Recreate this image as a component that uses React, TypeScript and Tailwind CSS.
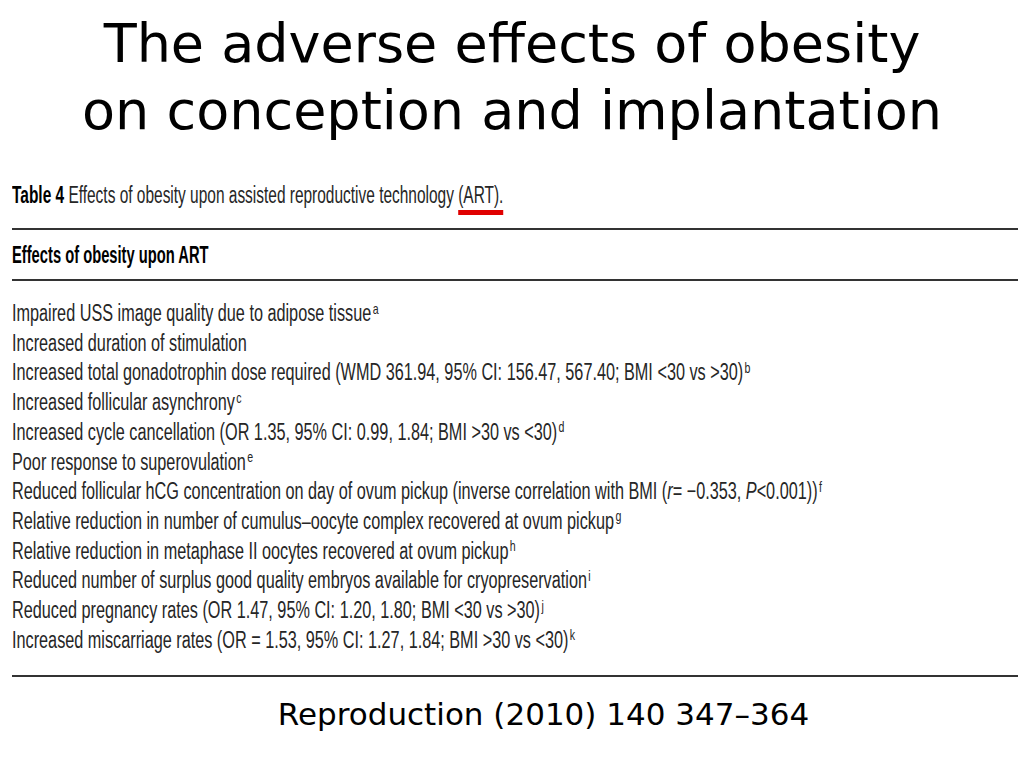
import type { ReactNode } from "react";

const rows: ReactNode[] = [
  <>Impaired USS image quality due to adipose tissue<sup>a</sup></>,
  <>Increased duration of stimulation</>,
  <>Increased total gonadotrophin dose required (WMD 361.94, 95% CI: 156.47, 567.40; BMI &lt;30 vs &gt;30)<sup>b</sup></>,
  <>Increased follicular asynchrony<sup>c</sup></>,
  <>Increased cycle cancellation (OR 1.35, 95% CI: 0.99, 1.84; BMI &gt;30 vs &lt;30)<sup>d</sup></>,
  <>Poor response to superovulation<sup>e</sup></>,
  <>
    Reduced follicular hCG concentration on day of ovum pickup (inverse correlation with BMI (<i>r</i>= −0.353, <i>P</i>&lt;0.001))<sup>f</sup>
  </>,
  <>Relative reduction in number of cumulus–oocyte complex recovered at ovum pickup<sup>g</sup></>,
  <>Relative reduction in metaphase II oocytes recovered at ovum pickup<sup>h</sup></>,
  <>Reduced number of surplus good quality embryos available for cryopreservation<sup>i</sup></>,
  <>Reduced pregnancy rates (OR 1.47, 95% CI: 1.20, 1.80; BMI &lt;30 vs &gt;30)<sup>j</sup></>,
  <>Increased miscarriage rates (OR = 1.53, 95% CI: 1.27, 1.84; BMI &gt;30 vs &lt;30)<sup>k</sup></>,
];

// journal table text is a condensed face; squeeze Liberation Sans to match
const narrow = "origin-left whitespace-nowrap";

export default function App() {
  return (
    <div className="h-[768px] w-[1024px] overflow-hidden bg-white text-black">
      <h1 className="pt-[10px] text-center font-['DejaVu_Sans',sans-serif] text-[54px] leading-[67px] font-normal">
        The adverse effects of obesity
        <br />
        on conception and implantation
      </h1>

      <div className="mt-[36px] pl-[12px] font-['Liberation_Sans',Arial,sans-serif] text-[23px] text-[#262626]">
        <p className={`${narrow} scale-x-[0.672] leading-[30px]`}>
          <b className="text-black">Table 4</b> Effects of obesity upon assisted reproductive technology{" "}
          <span className="relative">
            (ART).
            <span className="absolute top-[28px] right-0 left-0 h-[5px] bg-[#e00000]" />
          </span>
        </p>
        <div className="mt-[18px] mr-[6px] h-[2px] bg-[#333]" />
        <p className={`${narrow} mt-[10px] scale-x-[0.64] leading-[30px] font-bold text-black`}>
          Effects of obesity upon ART
        </p>
        <div className="mt-[9px] mr-[6px] h-[2px] bg-[#333]" />
        <ul className="mt-[18px] leading-[29.7px] [&_sup]:ml-[2px] [&_sup]:text-[15px]">
          {rows.map((r, i) => (
            <li key={i} className={`${narrow} scale-x-[0.706]`}>
              {r}
            </li>
          ))}
        </ul>
        <div className="mt-[20px] mr-[6px] h-[2px] bg-[#333]" />
      </div>

      <p className="mt-[19px] pl-[63px] text-center font-['DejaVu_Sans',sans-serif] text-[31px] leading-[36px]">
        Reproduction (2010) 140 347–364
      </p>
    </div>
  );
}
